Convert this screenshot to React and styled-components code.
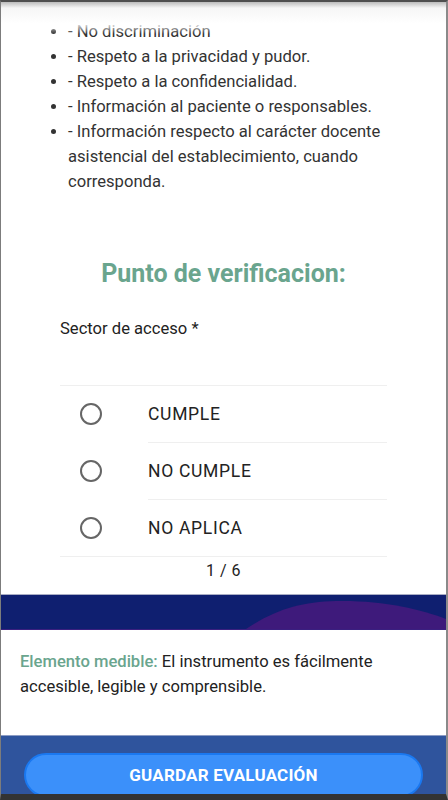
import React from "react";
import styled, { createGlobalStyle } from "styled-components";

const GlobalStyle = createGlobalStyle`
  html, body {
    margin: 0;
    padding: 0;
    background: #333;
  }
  body {
    font-family: Roboto, "Liberation Sans", Arial, sans-serif;
  }
  * {
    box-sizing: border-box;
  }
`;

const teal = "#6aa58e";

const Frame = styled.div`
  position: relative;
  width: 448px;
  height: 800px;
  overflow: hidden;
  display: flex;
  flex-direction: column;
  background: #fff;
  border-top: 2px solid #4f4f4f;
  border-left: 1px solid #7c7c7c;
  border-right: 2px solid #8a8a8a;
  border-bottom: 6px solid #333;
`;

const TopShade = styled.div`
  position: absolute;
  top: 0;
  left: 0;
  right: 0;
  height: 32px;
  pointer-events: none;
  background: linear-gradient(
    to bottom,
    #bcbcbc 0,
    #f6f6f6 6px,
    rgba(255, 255, 255, 0.85) 22px,
    rgba(255, 255, 255, 0) 32px
  );
`;

const Content = styled.main`
  flex: 1;
  display: flex;
  flex-direction: column;
  align-items: center;
`;

const Bullets = styled.ul`
  align-self: stretch;
  margin: 17px 0 0 27px;
  padding: 0 40px 0 40px;
  font-size: 16.6px;
  line-height: 25px;
  color: #333;
`;

const Title = styled.h2`
  margin: 65px 0 0;
  font-size: 25px;
  line-height: 30px;
  font-weight: 700;
  color: ${teal};
  text-align: center;
`;

const Question = styled.section`
  width: 327px;
  margin-top: 28px;
`;

const QuestionLabel = styled.div`
  font-size: 16.6px;
  line-height: 24px;
  color: #222;
  padding-bottom: 44px;
  border-bottom: 1px solid #efefef;
`;

const Options = styled.div`
  display: flex;
  flex-direction: column;
  border-bottom: 1px solid #efefef;
`;

const Option = styled.label`
  display: flex;
  align-items: stretch;
`;

const RadioCell = styled.div`
  width: 88px;
  display: flex;
  align-items: center;
  padding-left: 20px;
`;

const Radio = styled.span`
  width: 22px;
  height: 22px;
  border-radius: 50%;
  border: 2px solid #666;
`;

const OptionText = styled.div`
  flex: 1;
  height: ${({ $first }) => ($first ? "56px" : "57px")};
  display: flex;
  align-items: center;
  border-top: ${({ $first }) => ($first ? "none" : "1px solid #efefef")};
  font-size: 17.5px;
  letter-spacing: 0.7px;
  color: #222;
`;

const Pager = styled.div`
  margin-top: 2px;
  font-size: 16px;
  line-height: 24px;
  color: #222;
  letter-spacing: 0.5px;
`;

const Band = styled.div`
  margin-top: 11px;
  height: 36px;
  background: #0f1f70;
  border-top: 1px solid #a9adc4;
  border-bottom: 1px solid #3a1f80;
  display: flex;
`;

const Wave = styled.svg`
  width: 100%;
  height: 100%;
  display: block;
`;

const Measurable = styled.p`
  margin: 0;
  padding: 19px 40px 0 19px;
  height: 106px;
  font-size: 16.6px;
  line-height: 25px;
  color: #222;
`;

const MeasurableTag = styled.span`
  color: ${teal};
  font-weight: 500;
`;

const Footer = styled.footer`
  height: 59px;
  flex-shrink: 0;
  background: #2f549d;
  border-top: 1px solid #8c9cc4;
  padding: 17px 23px 0;
`;

const SaveButton = styled.button`
  width: 100%;
  height: 44px;
  border-radius: 22px;
  border: 2px solid #1a78f0;
  background: #3b90fa;
  color: #fff;
  font-family: Roboto, "Liberation Sans", Arial, sans-serif;
  font-size: 17px;
  font-weight: 700;
  letter-spacing: 0.2px;
  text-transform: uppercase;
  cursor: pointer;
`;

const rights = [
  "- No discriminación",
  "- Respeto a la privacidad y pudor.",
  "- Respeto a la confidencialidad.",
  "- Información al paciente o responsables.",
  "- Información respecto al carácter docente asistencial del establecimiento, cuando corresponda.",
];

const choices = ["CUMPLE", "NO CUMPLE", "NO APLICA"];

export default function App() {
  return (
    <>
      <GlobalStyle />
      <Frame>
        <Content>
          <Bullets>
            {rights.map((r) => (
              <li key={r}>{r}</li>
            ))}
          </Bullets>

          <Title>Punto de verificacion:</Title>

          <Question>
            <QuestionLabel>Sector de acceso *</QuestionLabel>
            <Options>
              {choices.map((c, i) => (
                <Option key={c}>
                  <RadioCell>
                    <Radio />
                  </RadioCell>
                  <OptionText $first={i === 0}>{c}</OptionText>
                </Option>
              ))}
            </Options>
          </Question>

          <Pager>1 / 6</Pager>
        </Content>

        <Band>
          <Wave viewBox="0 0 445 34" preserveAspectRatio="none">
            <path
              d="M245 34 C275 14 300 7 335 6 C380 5 420 14 445 24 L445 34 Z"
              fill="#3e1a7b"
            />
          </Wave>
        </Band>

        <Measurable>
          <MeasurableTag>Elemento medible:</MeasurableTag> El instrumento es
          fácilmente accesible, legible y comprensible.
        </Measurable>

        <Footer>
          <SaveButton>Guardar evaluación</SaveButton>
        </Footer>

        <TopShade />
      </Frame>
    </>
  );
}
